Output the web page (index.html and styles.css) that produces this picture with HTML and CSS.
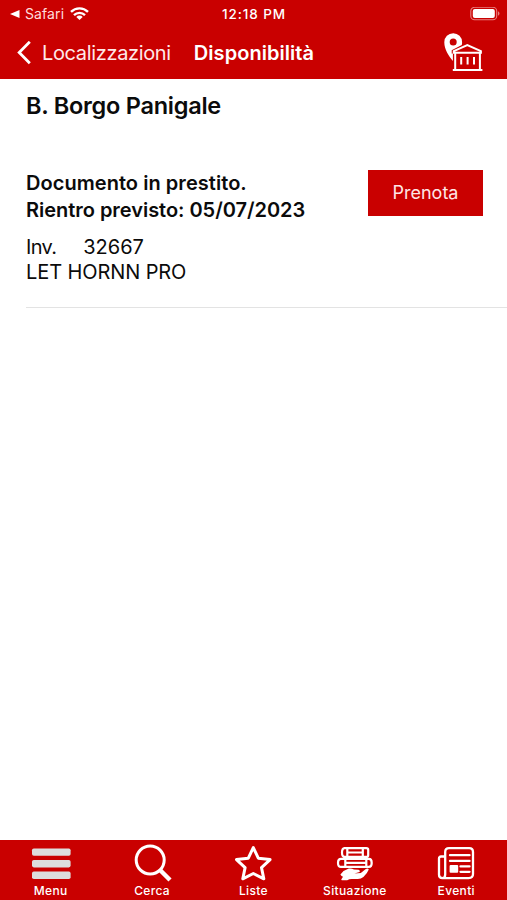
FILE: index.html
```html
<!doctype html>
<html lang="it">
<head>
	<meta charset="utf-8">
	<meta name="viewport" content="width=device-width, initial-scale=1">
	<title>Disponibilità</title>
	<link rel="stylesheet" href="styles.css">
</head>
<body>

<header>
	<div class="status-bar">
		<div class="status-left">
			<svg class="back-app" width="10" height="8" viewBox="0 0 10 8"><path d="M0 4L9.5 0v8z"/></svg>
			<span class="app-name">Safari</span>
			<svg class="wifi" width="19" height="14" viewBox="0 0 19 14">
				<path d="M1 4.8a12.2 12.2 0 0 1 17 0M4 8.1a7.9 7.9 0 0 1 11 0"/>
				<path class="fill" d="M9.5 13L6.3 9.9a4.6 4.6 0 0 1 6.4 0z"/>
			</svg>
		</div>
		<div class="clock">12:18 PM</div>
		<svg class="battery" width="30" height="14" viewBox="0 0 30 14">
			<rect class="case" x=".8" y=".3" width="25.9" height="12.4" rx="3.8"/>
			<rect class="level" x="2.8" y="2.1" width="22" height="8.8" rx="2"/>
			<path class="tip" d="M28 4.3c2 .8 2 3.6 0 4.4z"/>
		</svg>
	</div>
	<nav class="nav-bar">
		<a class="back" href="#">
			<svg width="15" height="24" viewBox="0 0 15 24"><path d="M12.8 .8L2.2 11.5l10.6 10.8"/></svg>
			<span>Localizzazioni</span>
		</a>
		<h1>Disponibilità</h1>
		<svg class="library" width="40" height="40" viewBox="0 0 40 40">
			<path class="pin" fill-rule="evenodd" d="M9.2.2a8.9 8.9 0 0 0-8.9 9c0 7.2 4.5 13.6 8.6 18.8V20.4H7.7v-3.2L17.8 12q.3-1.4.3-2.8a8.9 8.9 0 0 0-8.9-9zm0 5.4a3.5 3.5 0 1 1 0 7 3.5 3.5 0 0 1 0-7z"/>
			<path class="house" d="M9.8 19.8V18.2L23.3 12.1l13.6 6.1v1.6zM11.2 19.8V37M35.9 19.8V37M8.8 37h29.6M17.2 24v7.4M23.6 24v7.4M30 24v7.4"/>
		</svg>
	</nav>
</header>

<main>
	<h2>B. Borgo Panigale</h2>
	<div class="item">
		<div class="item-info">
			<div class="loan">Documento in prestito.</div>
			<div class="due">Rientro previsto: 05/07/2023</div>
			<div class="inv"><span>Inv.</span><span>32667</span></div>
			<div class="shelf">LET HORNN PRO</div>
		</div>
		<button type="button">Prenota</button>
	</div>
</main>

<footer>
	<a class="tab" href="#">
		<svg class="menu" width="40" height="38" viewBox="0 0 40 38">
			<rect x="1" y="4.4" width="38.6" height="7.4" rx="1.8"/>
			<rect x="1" y="16" width="38.6" height="7.4" rx="1.8"/>
			<rect x="1" y="27.6" width="38.6" height="7.4" rx="1.8"/>
		</svg>
		<span>Menu</span>
	</a>
	<a class="tab" href="#">
		<svg class="search" width="40" height="38" viewBox="0 0 40 38">
			<circle cx="18.2" cy="16" r="14"/>
			<path d="M28 26l10 10"/>
		</svg>
		<span>Cerca</span>
	</a>
	<a class="tab" href="#">
		<svg class="star" width="40" height="38" viewBox="0 0 40 38">
			<path d="M20.3 3.6l5 10.6 11.8 1.4-8.6 8 2.3 11.2-10.5-5.3-10.5 5.3 2.3-11.2-8.6-8 11.8-1.4z"/>
		</svg>
		<span>Liste</span>
	</a>
	<a class="tab" href="#">
		<svg class="books" width="40" height="38" viewBox="0 0 40 38">
			<path d="M9.5 4.1h21.8q1.9 0 1.9 1.6v5.6q0 1.6-1.9 1.6H9.5Q7 12.7 7 8.5T9.5 4.1zM6 14.9h28q2.7 0 2.7 4t-2.7 4H6q-3 0-3-4t3-4z"/>
			<path d="M12.3 4.1v8.8M27.8 4.1v8.8M10.3 14.9v8M31.3 14.9v8M12.3 8.5h15.5M10.3 18.9h21"/>
			<path class="hand" d="M5.4 30.4q4-4.6 8.4-5.8 2.6-.5 5.2.8l4.6.4q2 .8 1 2.2l-5.2 1.4 6.4-.4 5-4q2.2-1.2 3 .6-1.6 4.2-5.4 7.4-2.4 2-5.6 2h-6.2q-2.4 0-4.4 1.2H7q-1 0-.6-1l1.6-2.4q-1.6-.4-2.6-2.4z"/>
		</svg>
		<span>Situazione</span>
	</a>
	<a class="tab" href="#">
		<svg class="news" width="40" height="38" viewBox="0 0 40 38">
			<path d="M9.2 12.5H5q-2 0-2 2v16.3q0 3.3 3.3 3.3h26.4q4.3 0 4.3-4V8q0-3.8-3.8-3.8H13Q9.2 4.2 9.2 8v22.4q0 3.7-3 3.7"/>
			<path d="M14 11.2h19.5M14 16.9h19.5M24.5 22.4h9M24.5 27.8h9"/>
			<rect x="13.6" y="21" width="8.6" height="7.8" rx="1"/>
		</svg>
		<span>Eventi</span>
	</a>
</footer>

</body>
</html>
```

FILE: styles.css
```css
html,body{
	height: 100%;
	margin: 0;
	padding: 0;
}
*{
	box-sizing: border-box;
}
body{
	display: flex;
	flex-direction: column;
	background: #fff;
	color: #0b0b0b;
	font-family: Inter, "Liberation Sans", sans-serif;
	font-size: 20px;
}
a{
	color: inherit;
	text-decoration: none;
}
svg{
	display: block;
	flex: none;
	fill: none;
	stroke: #fff;
	stroke-linecap: round;
	stroke-linejoin: round;
}

/* top bars */
header{
	height: 79px;
	background: #c90000;
	color: #fff;
}
.status-bar{
	display: grid;
	grid-template-columns: 1fr auto 1fr;
	align-items: center;
	height: 27px;
	padding: 0 7px 0 10px;
}
.status-left{
	display: flex;
	align-items: center;
}
.back-app{
	fill: #fff;
	stroke: none;
}
.app-name{
	margin: 0 6px 0 5px;
	color: #ffdcdc;
	font-size: 14px;
	letter-spacing: .1px;
}
.wifi{
	stroke-width: 2.4;
	stroke-linecap: butt;
}
.wifi .fill{
	fill: #fff;
	stroke: none;
}
.clock{
	margin-right: 2px;
	font-size: 13.5px;
	font-weight: 500;
	letter-spacing: .9px;
}
.battery{
	justify-self: end;
}
.battery .case{
	stroke: #e78080;
	stroke-width: 1.1;
}
.battery .level{
	fill: #fff;
	stroke: none;
}
.battery .tip{
	fill: #e78080;
	stroke: none;
}
.nav-bar{
	display: flex;
	align-items: center;
	height: 51px;
	padding: 0 23px 0 17px;
}
.back{
	display: flex;
	align-items: center;
	gap: 10px;
	color: #ffe9e9;
	letter-spacing: -.35px;
}
.back svg{
	stroke-width: 2.8;
	stroke-linecap: butt;
	stroke-linejoin: miter;
}
.nav-bar h1{
	margin: 0 auto 0 23px;
	font-size: 20px;
	font-weight: 600;
	letter-spacing: .05px;
}
.library{
	stroke-width: 2;
}
.library .pin{
	fill: #fff;
	stroke: none;
}
.library .house{
	stroke-linecap: butt;
	stroke-linejoin: miter;
}

/* content */
main{
	flex: 1;
	padding-left: 26px;
}
h2{
	margin: 12px 0 0;
	font-size: 23.5px;
	font-weight: 600;
	line-height: 30px;
	letter-spacing: -.25px;
}
.item{
	display: flex;
	justify-content: space-between;
	align-items: flex-start;
	height: 159px;
	margin-top: 28px;
	padding: 20px 24px 0 0;
	border-bottom: 1px solid #e3e3e3;
}
.item-info{
	padding-top: 1px;
}
.loan, .due{
	font-weight: 600;
	line-height: 27px;
}
.loan{
	letter-spacing: .05px;
}
.due{
	letter-spacing: -.03px;
}
.inv{
	display: flex;
	gap: 27px;
	margin-top: 11px;
}
.inv span:first-child{
	letter-spacing: -.7px;
}
.inv, .shelf{
	line-height: 25px;
}
.shelf{
	letter-spacing: -.1px;
}
button{
	width: 115px;
	height: 46px;
	margin-top: .5px;
	padding: 0;
	border: none;
	background: #c90000;
	color: #ffe6e6;
	font-family: inherit;
	font-size: 18px;
}

/* bottom tabs */
footer{
	display: grid;
	grid-template-columns: repeat(5, 1fr);
	height: 60px;
	background: #c90000;
	color: #fff;
}
.tab{
	display: flex;
	flex-direction: column;
	align-items: center;
	padding-top: 4px;
	font-size: 12px;
	font-weight: 500;
	line-height: 15px;
	letter-spacing: .35px;
}
.tab svg{
	stroke-width: 2.6;
}
.tab span{
	margin-top: 1px;
}
.menu rect{
	fill: #ddd;
	stroke: none;
}
.tab .search{
	stroke-width: 3;
	stroke-linecap: butt;
}
.search path{
	stroke-width: 4.4;
}
.tab .star{
	stroke-width: 3;
}
.tab .books{
	stroke-width: 2.2;
}
.hand, .news rect{
	fill: #fff;
	stroke: none;
}
.tab .news{
	stroke-width: 2.3;
}
```
